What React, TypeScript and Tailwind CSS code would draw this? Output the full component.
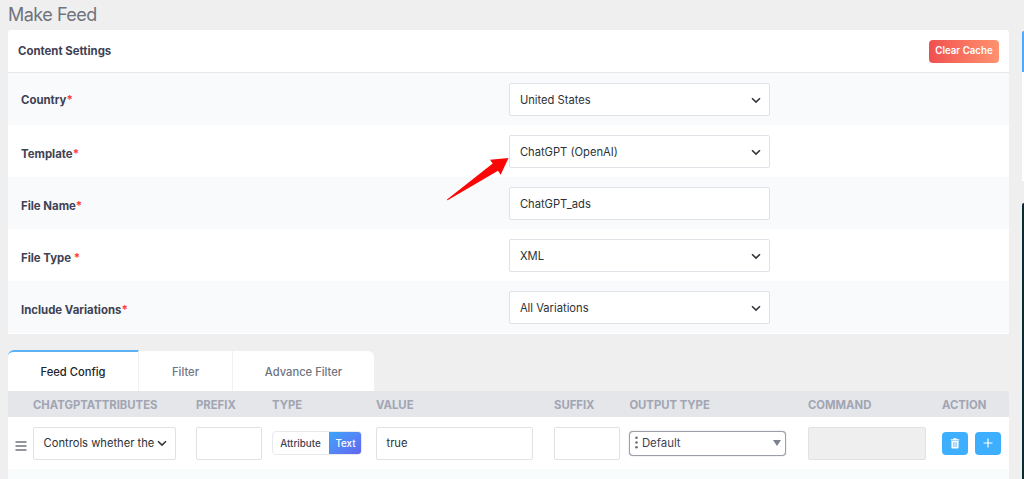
import type { ReactNode } from "react";
import clsx from "clsx";

const settings = [
  { label: "Country", value: "United States", select: true, labelPad: "pt-[9px]" },
  { label: "Template", value: "ChatGPT (OpenAI)", select: true, labelPad: "pt-[11px]" },
  { label: "File Name", value: "ChatGPT_ads", select: false, labelPad: "pt-[11px]" },
  { label: "File Type ", value: "XML", select: true, labelPad: "pt-[11px]" },
  { label: "Include Variations", value: "All Variations", select: true, labelPad: "pt-[11px]" },
];

const tabs = [
  { name: "Feed Config", width: "w-[131px]" },
  { name: "Filter", width: "w-[94px]" },
  { name: "Advance Filter", width: "w-[141px]" },
];

const columns = ["ChatGPTAttributes", "Prefix", "Type", "Value", "Suffix", "Output Type", "Command", "Action"];

const gridColumns = "grid grid-cols-[25px_163px_76px_104px_178px_75.4px_178.6px_134px_67px]";

function Chevron() {
  return (
    <svg width="10" height="7" viewBox="0 0 10 7" fill="none" className="shrink-0" aria-hidden>
      <path d="M1 1.2 5 5.1 9 1.2" stroke="#32373c" strokeWidth="1.6" />
    </svg>
  );
}

function Field({ children, className }: { children?: ReactNode; className?: string }) {
  return (
    <div
      className={clsx(
        "flex h-[33px] items-center justify-between rounded-[2px] border border-[#dfe2e6] pt-px pl-[9.5px] text-[11.2px] text-[#2c3338]",
        className,
      )}
    >
      {children}
    </div>
  );
}

function ContentSettings() {
  return (
    <section className="h-[304px] overflow-hidden rounded-t-[3px] bg-white">
      <header className="flex h-[43px] items-center justify-between border-b border-[#e6e7e9] pl-2.5 pr-[10px]">
        <h2 className="pt-[2px] text-[11.4px] font-bold text-[#3f4254]">Content Settings</h2>
        <button
          type="button"
          className="flex h-[23px] w-[70px] items-center justify-center rounded-[4px] bg-linear-to-r from-[#ef4f50] to-[#ff916f] pt-px text-[9.7px] font-semibold whitespace-nowrap text-white"
        >
          Clear Cache
        </button>
      </header>
      {settings.map((item) => (
        <div
          key={item.label}
          className="flex h-[52px] items-start pl-[13px] pt-[10px] odd:bg-white even:bg-[#f9fafc]"
        >
          <label
            className={clsx(
              "w-[488.4px] text-[11.4px] leading-[16px] font-bold whitespace-pre text-[#3f4254]",
              item.labelPad,
            )}
          >
            {item.label}
            <span className="text-[#ff3b3b]">*</span>
          </label>
          <Field className="w-[261px] bg-white pr-2">
            <span>{item.value}</span>
            {item.select && <Chevron />}
          </Field>
        </div>
      ))}
    </section>
  );
}

function TypeSwitch() {
  return (
    <div className="flex h-[24px] w-[90px] overflow-hidden rounded-[4px] border border-[#e8eaee] text-[9.8px] font-medium">
      <span className="flex w-[56px] items-center justify-center pt-[2px] pr-px text-[#3f4254]">Attribute</span>
      <span className="-my-px -mr-px flex w-[33px] items-center justify-center bg-linear-to-br from-[#35a6fb] to-[#6262f0] pt-[2px] text-white">
        Text
      </span>
    </div>
  );
}

function OutputSelect() {
  return (
    <div className="flex h-[25px] w-[157px] items-center rounded-[4px] border border-[#9b9fa8] bg-white pr-1 pl-[5px] text-[11.4px] text-[#3f4254] shadow-[0_0_1px_#888]">
      <svg width="3" height="13" viewBox="0 0 3 13" fill="#687076" className="mb-0.5 shrink-0" aria-hidden>
        <circle cx="1.5" cy="1.8" r="1.3" />
        <circle cx="1.5" cy="6.5" r="1.3" />
        <circle cx="1.5" cy="11.2" r="1.3" />
      </svg>
      <span className="ml-[3.5px] flex-1 pt-[2px]">Default</span>
      <svg width="8" height="6" viewBox="0 0 8 6" fill="#7c8190" aria-hidden>
        <path d="M0 0h8L4 6z" />
      </svg>
    </div>
  );
}

function RowActions() {
  return (
    <div className="flex gap-[7px]">
      <button type="button" className="flex h-[23px] w-[26px] items-center justify-center rounded-[4px] bg-[#3eafff]">
        <svg width="10" height="11" viewBox="0 0 10 11" fill="none" aria-hidden>
          <path d="M.8 1.3h8.4v1.1H.8zM3.5.3h3v1.2h-3z" fill="#fff" />
          <path d="M1.4 3h7.2v6.5q0 1-1 1H2.4q-1 0-1-1z" fill="#fff" />
          <path d="M3.9 4.1v5M6.1 4.1v5" stroke="#3eafff" strokeWidth=".9" />
        </svg>
      </button>
      <button type="button" className="flex h-[23px] w-[26px] items-center justify-center rounded-[4px] bg-[#3eafff]">
        <svg width="10" height="10" viewBox="0 0 10 10" aria-hidden>
          <path d="M5 .5v9M.5 5h9" stroke="#fff" strokeWidth="1.2" />
        </svg>
      </button>
    </div>
  );
}

function FeedConfig() {
  return (
    <section className="mt-[16px]">
      <nav className="flex h-[41px] items-end text-[11.2px] font-medium">
        {tabs.map((tab, i) => (
          <button
            key={tab.name}
            type="button"
            className={clsx(
              "flex items-center justify-center border-r border-r-[#f0f1f3] bg-white pt-[2px]",
              tab.width,
              i === 0
                ? "h-[41px] rounded-tl-[6px] border-t-2 border-t-[#5db1f5] text-[#212529]"
                : "h-[40px] text-[#6f7480]",
              i === 2 && "rounded-tr-[6px] border-r-0",
            )}
          >
            {tab.name}
          </button>
        ))}
      </nav>
      <div
        className={clsx(
          gridColumns,
          "h-[26px] items-center rounded-tr-[4px] bg-[#e4e6ea] pt-[2px] text-[11.3px] font-bold text-[#a1a5b3] uppercase",
        )}
      >
        <span />
        {columns.map((name) => (
          <span key={name} className="whitespace-nowrap">
            {name}
          </span>
        ))}
      </div>
      <div className={clsx(gridColumns, "h-[52px] items-center bg-white")}>
        <svg width="12" height="10" viewBox="0 0 12 10" className="mt-[6px] ml-[7px]" aria-hidden>
          <path d="M.5 1h11M.5 5h11M.5 9h11" stroke="#70757d" strokeWidth="1.3" />
        </svg>
        <Field className="w-[143px] pr-2 whitespace-nowrap">
          <span>Controls whether the</span>
          <Chevron />
        </Field>
        <Field className="w-[66px]" />
        <TypeSwitch />
        <Field className="w-[157px]">true</Field>
        <Field className="w-[66px]" />
        <OutputSelect />
        <Field className="w-[118px] bg-[#efefef]" />
        <RowActions />
      </div>
      <div className="h-[10px] bg-[#f9fcfd]" />
    </section>
  );
}

function PointerArrow() {
  return (
    <svg
      width="62"
      height="44"
      viewBox="0 0 62 44"
      className="absolute top-[157px] left-[447px]"
      fill="#fb0606"
      aria-hidden
    >
      <path d="M61.5 1 43 2.8l2.7 3.7L0 42.5q0 1 1 .5l50-29.2 2.7 4z" />
    </svg>
  );
}

export default function App() {
  return (
    <main className="relative flex h-[479px] w-[1024px] gap-[13px] overflow-hidden bg-[#efefef] pl-2 font-[Inter,sans-serif]">
      <div className="w-[1001px] shrink-0">
        <h1 className="h-[30px] pt-[3px] text-[18px] leading-[24px] tracking-[-0.5px] text-[#70737d]">Make Feed</h1>
        <ContentSettings />
        <FeedConfig />
      </div>
      <aside className="w-[2px] shrink-0 pt-[31px]">
        <div className="h-[41px] rounded-tl-[2px] bg-[#4daafa]" />
        <div className="h-[109px] bg-white" />
        <div className="mt-[22px] h-[276px] rounded-tl-[2px] bg-[#0b2b33]" />
      </aside>
      <PointerArrow />
    </main>
  );
}
